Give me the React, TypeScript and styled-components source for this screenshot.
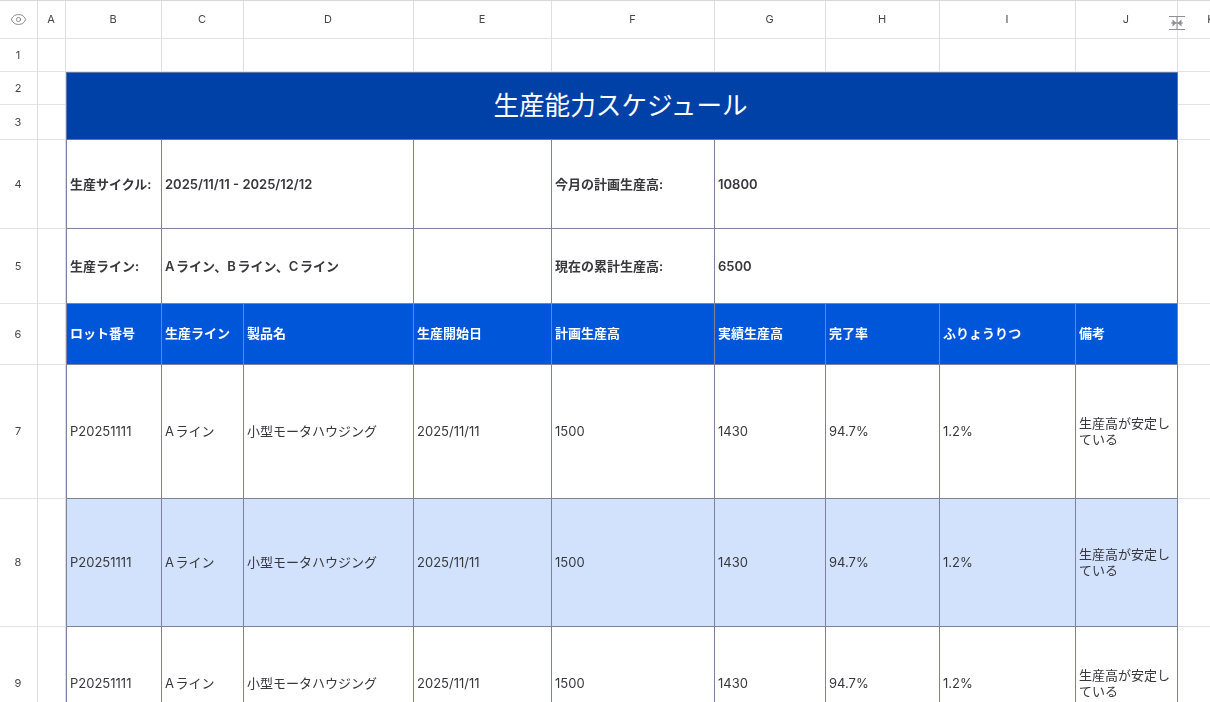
import React from 'react';
import styled, { createGlobalStyle } from 'styled-components';
import { Eye } from 'lucide-react';

const GlobalStyle = createGlobalStyle`
  html, body {
    margin: 0;
    padding: 0;
    height: 100%;
    overflow: hidden;
    background: #ffffff;
  }
  body {
    font-family: Inter, "Liberation Sans", "Noto Sans CJK JP", sans-serif;
    color: #3c3c40;
    text-autospace: normal;
  }
`;

const Viewport = styled.div`
  position: relative;
  width: 1210px;
  height: 702px;
  overflow: hidden;
`;

const Sheet = styled.div`
  display: grid;
  width: 1246px;
  grid-template-columns: 38px 28px 96px 82px 170px 138px 163px 111px 114px 136px 102px 68px;
  grid-template-rows: 38px 33px 33px 35px 89px 75px 61px 134px 128px 114px;
  border-top: 1px solid #d8d8db;
  filter: blur(0.35px);
`;

const Plain = styled.div`
  box-sizing: border-box;
  display: flex;
  align-items: center;
  justify-content: center;
  border-right: 1px solid #dedee2;
  border-bottom: 1px solid #e3e3e6;
  font-size: 11px;
  color: #46464a;
  overflow: hidden;
`;

const Label = styled(Plain)`
  padding: 0 1px 1px 0;
`;

const Blank = styled(Plain)<{ $noRight?: boolean }>`
  ${(p) => (p.$noRight ? 'border-right: none;' : '')}
`;

const Title = styled.div`
  grid-column: 3 / span 9;
  grid-row: 3 / span 2;
  box-sizing: border-box;
  display: flex;
  align-items: center;
  justify-content: center;
  padding: 0 3px 5px 0;
  background: #0041a8;
  color: #ffffff;
  font-size: 25.6px;
  border: 1px solid #5f74ad;
`;

type Tone = 'white' | 'blue' | 'light';

const toneBackground: Record<Tone, string> = {
  white: '#ffffff',
  blue: '#0056d9',
  light: '#d3e2fc',
};

const bottomPadding = (tone?: Tone, bold?: boolean) => {
  if (tone === 'blue') return '3px';
  return bold ? '1px' : '2px';
};

const Cell = styled.div<{ $tone?: Tone; $span?: number; $bold?: boolean }>`
  grid-column: span ${(p) => p.$span ?? 1};
  box-sizing: border-box;
  display: flex;
  align-items: center;
  padding: 0 3px ${(p) => bottomPadding(p.$tone, p.$bold)} 3px;
  background: ${(p) => toneBackground[p.$tone ?? 'white']};
  color: ${(p) => (p.$tone === 'blue' ? '#ffffff' : '#37373c')};
  font-size: 13px;
  line-height: 16px;
  font-weight: ${(p) => (p.$bold || p.$tone === 'blue' ? 600 : 400)};
  border-right: 1px solid #7f819d;
  border-bottom: 1px solid #7f819d;
  overflow: hidden;
`;

const FirstCell = styled(Cell)`
  border-left: 1px solid #7f819d;
`;

const ResizeCursor = styled.svg`
  position: absolute;
  left: 1168px;
  top: 15px;
`;

const columns = ['A', 'B', 'C', 'D', 'E', 'F', 'G', 'H', 'I', 'J', 'K'];
const headers = ['ロット番号', '生産ライン', '製品名', '生産開始日', '計画生産高', '実績生産高', '完了率', 'ふりょうりつ', '備考'];
const record = ['P20251111', 'Aライン', '小型モータハウジング', '2025/11/11', '1500', '1430', '94.7%', '1.2%', '生産高が安定している'];

function DataRow({ number, tone }: { number: number; tone: Tone }) {
  return (
    <>
      <Label>{number}</Label>
      <Blank />
      {record.map((value, i) =>
        i === 0 ? (
          <FirstCell key={i} $tone={tone}>{value}</FirstCell>
        ) : (
          <Cell key={i} $tone={tone}>{value}</Cell>
        ),
      )}
      <Blank $noRight />
    </>
  );
}

export default function App() {
  return (
    <Viewport>
      <GlobalStyle />
      <Sheet>
        <Plain>
          <Eye size={17} strokeWidth={1.1} color="#6e6e73" />
        </Plain>
        {columns.map((c) => (
          <Label key={c}>{c}</Label>
        ))}

        <Label>1</Label>
        {columns.map((c, i) => (
          <Blank key={c} $noRight={i === columns.length - 1} />
        ))}

        <Label>2</Label>
        <Blank />
        <Title>生産能力スケジュール</Title>
        <Blank $noRight />

        <Label>3</Label>
        <Blank />
        <Blank $noRight />

        <Label>4</Label>
        <Blank />
        <FirstCell $bold>生産サイクル:</FirstCell>
        <Cell $span={2} $bold>2025/11/11 - 2025/12/12</Cell>
        <Cell />
        <Cell $bold>今月の計画生産高:</Cell>
        <Cell $span={4} $bold>10800</Cell>
        <Blank $noRight />

        <Label>5</Label>
        <Blank />
        <FirstCell $bold>生産ライン:</FirstCell>
        <Cell $span={2} $bold>Aライン、Bライン、Cライン</Cell>
        <Cell />
        <Cell $bold>現在の累計生産高:</Cell>
        <Cell $span={4} $bold>6500</Cell>
        <Blank $noRight />

        <Label>6</Label>
        <Blank />
        {headers.map((h, i) =>
          i === 0 ? (
            <FirstCell key={h} $tone="blue">{h}</FirstCell>
          ) : (
            <Cell key={h} $tone="blue">{h}</Cell>
          ),
        )}
        <Blank $noRight />

        <DataRow number={7} tone="white" />
        <DataRow number={8} tone="light" />
        <DataRow number={9} tone="white" />
      </Sheet>
      <ResizeCursor width="18" height="16" viewBox="0 0 18 16" fill="none" stroke="#8f8f93" strokeWidth="1">
        <path d="M1 1.5h16M1 14.5h16M9 1v14" />
        <path d="M3 8h12" />
        <path d="M8.5 8 4.5 4.5v7zM9.5 8l4-3.5v7z" fill="#8f8f93" stroke="none" />
      </ResizeCursor>
    </Viewport>
  );
}
